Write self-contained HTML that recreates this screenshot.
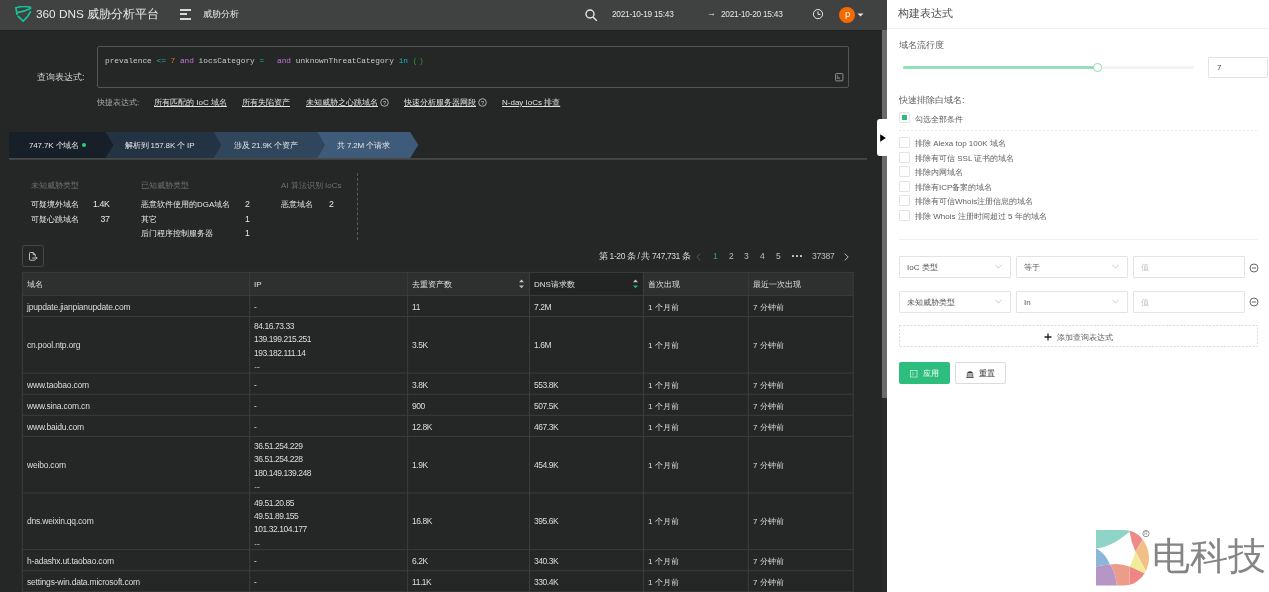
<!DOCTYPE html>
<html><head><meta charset="utf-8">
<style>
*{box-sizing:border-box;margin:0;padding:0}
html,body{width:1269px;height:592px;overflow:hidden;background:#252726;font-family:"Liberation Sans",sans-serif;}
.a{position:absolute;white-space:nowrap;will-change:transform}
#left{position:absolute;left:0;top:0;width:887px;height:592px;background:#252726;overflow:hidden}
#hdr{position:absolute;left:0;top:0;width:887px;height:30px;background:#404241}
#hdrline{position:absolute;left:0;top:30px;width:882px;height:1px;background:#1f2222}
.w{color:#e6e6e6}
.code{font-family:"Liberation Mono",monospace;font-size:7.8px;color:#c9c9c9}
.lnk{color:#e0e0e0;text-decoration:underline;font-size:8px}
.hl{height:1px;background:#3a3b3b}
.vl{width:1px;height:320px;background:#3a3b3b}
.th{font-size:8px;color:#e0e0e0;height:23px;line-height:23px;padding-top:1px}
.td{font-size:8px;color:#dcdcdc;padding-top:1.5px}
.ip{line-height:13px}
.num{font-size:8.5px;letter-spacing:-0.45px}
.dom{letter-spacing:-0.2px}
.dt{font-size:8px;color:#606060}
.cb{width:11px;height:11px;border:1px solid #e3e3e3;border-radius:1px}
.sel{width:112px;height:21.5px;border:1px solid #e3e3e3;border-radius:1px;font-size:8px;color:#555;line-height:21px;padding-left:7px}
.sel i{position:absolute;right:9px;top:6px;width:5px;height:5px;border-right:1px solid #c5c5c5;border-bottom:1px solid #c5c5c5;transform:rotate(45deg)}
.pg{top:250.5px;font-size:8.5px;color:#bdbdbd}
#drawer{position:absolute;left:887px;top:0;width:382px;height:592px;background:#fff}
</style></head><body>
<div id="left">
  <div id="hdr">
    <svg class="a" style="left:15px;top:6px" width="17" height="17" viewBox="0 0 17 17">
      <path d="M2.0 8.3 L0.9 1.8 Q8.5 -0.5 15.4 1.3 Q15.9 2.4 15.0 2.7 Q9 5.6 2.2 6.7" fill="none" stroke="#13c29e" stroke-width="1.7" stroke-linejoin="round" stroke-linecap="round"/>
      <path d="M15.4 5.8 Q13 11 8.2 15.2 L3.3 10.4" fill="none" stroke="#13c29e" stroke-width="1.7" stroke-linejoin="round" stroke-linecap="round"/>
    </svg>
    <div class="a w" style="left:36px;top:7.2px;font-size:11.8px;color:#e8e8e8">360 DNS 威胁分析平台</div>
    <div class="a" style="left:179.8px;top:9px;width:11px;height:1.5px;background:#dadada"></div>
    <div class="a" style="left:179.8px;top:13.4px;width:7px;height:1.5px;background:#dadada"></div>
    <div class="a" style="left:179.8px;top:17.7px;width:11px;height:1.5px;background:#dadada"></div>
    <div class="a w" style="left:203px;top:8px;font-size:9.2px">威胁分析</div>
    <svg class="a" style="left:585px;top:9px" width="13" height="13" viewBox="0 0 13 13"><circle cx="5" cy="5" r="4" fill="none" stroke="#e6e6e6" stroke-width="1.4"/><path d="M8 8 L11.8 11.8" stroke="#e6e6e6" stroke-width="1.4"/></svg>
    <div class="a w" style="left:612px;top:9px;font-size:8.3px;letter-spacing:-0.25px">2021-10-19 15:43</div>
    <div class="a w" style="left:707px;top:8px;font-size:9px">→</div>
    <div class="a w" style="left:720.5px;top:9px;font-size:8.3px;letter-spacing:-0.25px">2021-10-20 15:43</div>
    <svg class="a" style="left:812px;top:8px" width="12" height="12" viewBox="0 0 12 12"><circle cx="6" cy="6.1" r="4.6" fill="none" stroke="#e6e6e6" stroke-width="1"/><path d="M6 3.4 V6.4 H8.3" fill="none" stroke="#e6e6e6" stroke-width="1"/></svg>
    <div class="a" style="left:839px;top:6.8px;width:16.4px;height:16.4px;border-radius:50%;background:#f56a00"></div>
    <div class="a" style="left:844.6px;top:8.6px;font-size:9.5px;color:#fff;line-height:10px">p</div>
    <svg class="a" style="left:857px;top:13px" width="7" height="4" viewBox="0 0 7 4"><path d="M0.5 0.5 H6.5 L3.5 3.5Z" fill="#e6e6e6"/></svg>
  </div>
  <div id="hdrline"></div>

  <!-- query -->
  <div class="a" style="left:37px;top:71px;font-size:9px;color:#d0d0d0">查询表达式:</div>
  <div class="a" style="left:97px;top:46px;width:752px;height:42px;border:1px solid #535454;border-radius:2px"></div>
  <div class="a code" style="left:105px;top:57px">prevalence <span style="color:#1fb5b5">&lt;=</span> <span style="color:#d27a2a">7</span> <span style="color:#c678dd">and</span> iocsCategory <span style="color:#1fb5b5">=</span></div>
  <div class="a code" style="left:277px;top:57px"><span style="color:#c678dd">and</span> unknownThreatCategory <span style="color:#1fb5b5">in</span> <span style="color:#2ca02c;letter-spacing:1.7px">()</span></div>
  <svg class="a" style="left:834.5px;top:73px" width="8.5" height="8.5" viewBox="0 0 8.5 8.5"><rect x="0.6" y="0.6" width="7.3" height="7.3" rx="0.8" fill="none" stroke="#9a9a9a" stroke-width="0.9"/><path d="M2.4 2.2 V5.8 L3.4 4.8 L4.6 6.4 M3.4 4.8 H5" fill="none" stroke="#9a9a9a" stroke-width="0.7"/></svg>
  <div class="a" style="left:97px;top:97px;font-size:8px;color:#a8a8a8">快捷表达式:</div>
  <div class="a lnk" style="left:154px;top:97px">所有匹配的 IoC 域名</div>
  <div class="a lnk" style="left:242px;top:97px">所有失陷资产</div>
  <div class="a lnk" style="left:306px;top:97px">未知威胁之心跳域名</div>
  <svg class="a" style="left:380.2px;top:98px" width="9" height="9" viewBox="0 0 9 9"><circle cx="4.5" cy="4.5" r="3.8" fill="none" stroke="#cfcfcf" stroke-width="0.8"/><text x="4.5" y="6.6" font-size="5.5" text-anchor="middle" fill="#cfcfcf" font-family="Liberation Sans">?</text></svg>
  <svg class="a" style="left:478.3px;top:98px" width="9" height="9" viewBox="0 0 9 9"><circle cx="4.5" cy="4.5" r="3.8" fill="none" stroke="#cfcfcf" stroke-width="0.8"/><text x="4.5" y="6.6" font-size="5.5" text-anchor="middle" fill="#cfcfcf" font-family="Liberation Sans">?</text></svg>
  <div class="a lnk" style="left:404px;top:97px">快速分析服务器网段</div>
  <div class="a lnk" style="left:502px;top:97px">N-day IoCs 排查</div>

  <!-- steps -->
  <svg class="a" style="left:9px;top:132px" width="860" height="28" viewBox="0 0 860 28">
    <path d="M0 0 H96.6 L104.5 13 L96.6 26 H0Z" fill="#172029"/>
    <path d="M96.6 0 H204.6 L212.2 13 L204.6 26 H96.6 L104.5 13Z" fill="#233343"/>
    <path d="M204.6 0 H308.2 L315.8 13 L308.2 26 H204.6 L212.2 13Z" fill="#30465c"/>
    <path d="M308.2 0 H401.2 L409.3 13 L401.2 26 H308.2 L315.8 13Z" fill="#3e5b79"/>
    <rect x="0" y="26" width="858" height="1.8" fill="#474949"/>
  </svg>
  <div class="a w" style="left:28.6px;top:140px;font-size:8px;letter-spacing:-0.15px">747.7K 个域名</div>
  <div class="a" style="left:81.7px;top:143.2px;width:4px;height:4px;border-radius:50%;background:#2ecc71"></div>
  <div class="a w" style="left:125px;top:140px;font-size:8px;letter-spacing:-0.15px">解析到 157.8K 个 IP</div>
  <div class="a w" style="left:233.6px;top:140px;font-size:8px;letter-spacing:-0.15px">涉及 21.9K 个资产</div>
  <div class="a w" style="left:336.5px;top:140px;font-size:8px;letter-spacing:-0.15px">共 7.2M 个请求</div>

  <!-- stats -->
  <div class="a" style="left:30.6px;top:180px;font-size:8px;color:#707070">未知威胁类型</div>
  <div class="a w" style="left:30.6px;top:199px;font-size:8px">可疑境外域名</div>
  <div class="a w" style="left:30.6px;top:213.5px;font-size:8px">可疑心跳域名</div>
  <div class="a w" style="left:80px;top:199.1px;width:29.4px;text-align:right;font-size:8.8px;letter-spacing:-0.4px">1.4K</div>
  <div class="a w" style="left:80px;top:213.6px;width:29.4px;text-align:right;font-size:8.8px;letter-spacing:-0.4px">37</div>

  <div class="a" style="left:141px;top:180px;font-size:8px;color:#707070">已知威胁类型</div>
  <div class="a w" style="left:141px;top:199px;font-size:8px">恶意软件使用的DGA域名</div>
  <div class="a w" style="left:141px;top:213.5px;font-size:8px">其它</div>
  <div class="a w" style="left:141px;top:228px;font-size:8px">后门程序控制服务器</div>
  <div class="a w" style="left:220px;top:199.1px;width:29.4px;text-align:right;font-size:8.8px;letter-spacing:-0.4px">2</div>
  <div class="a w" style="left:220px;top:213.6px;width:29.4px;text-align:right;font-size:8.8px;letter-spacing:-0.4px">1</div>
  <div class="a w" style="left:220px;top:228.1px;width:29.4px;text-align:right;font-size:8.8px;letter-spacing:-0.4px">1</div>

  <div class="a" style="left:281px;top:180px;font-size:8px;color:#707070">AI 算法识别 IoCs</div>
  <div class="a w" style="left:281px;top:199px;font-size:8px">恶意域名</div>
  <div class="a w" style="left:304px;top:199.1px;width:29.4px;text-align:right;font-size:8.8px;letter-spacing:-0.4px">2</div>
  <div class="a" style="left:357px;top:173px;width:0;height:67px;border-left:1px dashed #5a5a5a"></div>

  <!-- toolbar -->
  <div class="a" style="left:22px;top:245px;width:22px;height:22px;border:1px solid #454646;border-radius:2.5px"></div>
  <svg class="a" style="left:29px;top:251.5px" width="9" height="9" viewBox="0 0 9 9"><path d="M4.2 0.5 H1.3 Q0.5 0.5 0.5 1.3 V7.4 Q0.5 8.2 1.3 8.2 H5.5 Q6.3 8.2 6.3 7.4 V7.3 M4.2 0.5 L6.3 2.6 V4.6 M4.2 0.5 V2.6 H6.3" fill="none" stroke="#cfcfcf" stroke-width="0.9"/><path d="M3.3 6 H8.2 M7 4.8 L8.2 6 L7 7.2" fill="none" stroke="#cfcfcf" stroke-width="0.9"/></svg>

  <!-- pagination -->
  <div class="a" style="left:598.5px;top:250.5px;font-size:8.5px;color:#dadada;letter-spacing:-0.4px">第 1-20 条 / 共 747,731 条</div>
  <svg class="a" style="left:696px;top:253px" width="5" height="8" viewBox="0 0 5 8"><path d="M4.3 0.6 L0.8 4 L4.3 7.4" fill="none" stroke="#5e5f5f" stroke-width="0.9"/></svg>
  <div class="a" style="left:712.5px;top:250.5px;font-size:8.5px;color:#27a872">1</div>
  <div class="a pg" style="left:728.5px">2</div>
  <div class="a pg" style="left:744px">3</div>
  <div class="a pg" style="left:759.5px">4</div>
  <div class="a pg" style="left:775.5px">5</div>
  <div class="a" style="left:791.5px;top:255.3px;width:1.7px;height:1.7px;background:#d0d0d0;border-radius:50%"></div>
  <div class="a" style="left:795.8px;top:255.3px;width:1.7px;height:1.7px;background:#d0d0d0;border-radius:50%"></div>
  <div class="a" style="left:800.1px;top:255.3px;width:1.7px;height:1.7px;background:#d0d0d0;border-radius:50%"></div>
  <div class="a pg" style="left:811.5px;letter-spacing:-0.2px">37387</div>
  <svg class="a" style="left:843.5px;top:253px" width="5" height="8" viewBox="0 0 5 8"><path d="M0.7 0.6 L4.2 4 L0.7 7.4" fill="none" stroke="#c8c8c8" stroke-width="0.9"/></svg>

  <div id="table">
<svg class="a" style="left:0;top:0" width="887" height="592" viewBox="0 0 887 592"><rect x="22.4" y="272.4" width="830.8" height="23.0" fill="#2e2f2f"/><rect x="529.5" y="272.4" width="113.9" height="23.0" fill="#222323"/><rect x="21.9" y="271.90" width="831.8" height="1" fill="#3b3c3c"/><rect x="21.9" y="294.90" width="831.8" height="1" fill="#3b3c3c"/><rect x="21.9" y="316.00" width="831.8" height="1" fill="#3b3c3c"/><rect x="21.9" y="372.60" width="831.8" height="1" fill="#3b3c3c"/><rect x="21.9" y="393.70" width="831.8" height="1" fill="#3b3c3c"/><rect x="21.9" y="414.80" width="831.8" height="1" fill="#3b3c3c"/><rect x="21.9" y="435.90" width="831.8" height="1" fill="#3b3c3c"/><rect x="21.9" y="492.50" width="831.8" height="1" fill="#3b3c3c"/><rect x="21.9" y="549.10" width="831.8" height="1" fill="#3b3c3c"/><rect x="21.9" y="570.20" width="831.8" height="1" fill="#3b3c3c"/><rect x="21.9" y="591.30" width="831.8" height="1" fill="#3b3c3c"/><rect x="21.9" y="271.9" width="1" height="330" fill="#3b3c3c"/><rect x="249.1" y="271.9" width="1" height="330" fill="#3b3c3c"/><rect x="407.1" y="271.9" width="1" height="330" fill="#3b3c3c"/><rect x="529.0" y="271.9" width="1" height="330" fill="#3b3c3c"/><rect x="642.9" y="271.9" width="1" height="330" fill="#3b3c3c"/><rect x="747.8" y="271.9" width="1" height="330" fill="#3b3c3c"/><rect x="852.7" y="271.9" width="1" height="330" fill="#3b3c3c"/></svg>
<div class="a th" style="left:26.9px;top:272.4px">域名</div>
<div class="a th" style="left:254.1px;top:272.4px">IP</div>
<div class="a th" style="left:412.1px;top:272.4px">去重资产数</div>
<div class="a th" style="left:534.0px;top:272.4px">DNS请求数</div>
<div class="a th" style="left:647.9px;top:272.4px">首次出现</div>
<div class="a th" style="left:752.8px;top:272.4px">最近一次出现</div>
<svg class="a" style="left:519.3px;top:279px" width="5" height="10" viewBox="0 0 5 10"><path d="M0 3.2 L2.5 0.6 L5 3.2Z" fill="#c4c4c4"/><path d="M0 6.6 L2.5 9.2 L5 6.6Z" fill="#bdbdbd"/></svg>
<svg class="a" style="left:633.2px;top:279px" width="5" height="10" viewBox="0 0 5 10"><path d="M0 3.2 L2.5 0.6 L5 3.2Z" fill="#c4c4c4"/><path d="M0 6.6 L2.5 9.2 L5 6.6Z" fill="#25b47e"/></svg>
<div class="a td num dom" style="left:26.9px;top:294.90px;height:21.1px;line-height:21.1px">jpupdate.jianpianupdate.com</div>
<div class="a td num" style="left:254.1px;top:294.90px;height:21.1px;line-height:21.1px">-</div>
<div class="a td num" style="left:411.6px;top:294.90px;height:21.1px;line-height:21.1px">11</div>
<div class="a td num" style="left:533.5px;top:294.90px;height:21.1px;line-height:21.1px">7.2M</div>
<div class="a td" style="left:647.9px;top:294.90px;height:21.1px;line-height:21.1px">1 个月前</div>
<div class="a td" style="left:752.8px;top:294.90px;height:21.1px;line-height:21.1px">7 分钟前</div>
<div class="a td num dom" style="left:26.9px;top:314.80px;height:56.6px;line-height:56.6px">cn.pool.ntp.org</div>
<div class="a td ip num" style="left:254.1px;top:318.1px">84.16.73.33</div>
<div class="a td ip num" style="left:254.1px;top:331.4px">139.199.215.251</div>
<div class="a td ip num" style="left:254.1px;top:344.7px">193.182.111.14</div>
<div class="a td ip num" style="left:254.1px;top:357.0px">...</div>
<div class="a td num" style="left:411.6px;top:314.80px;height:56.6px;line-height:56.6px">3.5K</div>
<div class="a td num" style="left:533.5px;top:314.80px;height:56.6px;line-height:56.6px">1.6M</div>
<div class="a td" style="left:647.9px;top:315.60px;height:56.6px;line-height:56.6px">1 个月前</div>
<div class="a td" style="left:752.8px;top:315.60px;height:56.6px;line-height:56.6px">7 分钟前</div>
<div class="a td num dom" style="left:26.9px;top:372.60px;height:21.1px;line-height:21.1px">www.taobao.com</div>
<div class="a td num" style="left:254.1px;top:372.60px;height:21.1px;line-height:21.1px">-</div>
<div class="a td num" style="left:411.6px;top:372.60px;height:21.1px;line-height:21.1px">3.8K</div>
<div class="a td num" style="left:533.5px;top:372.60px;height:21.1px;line-height:21.1px">553.8K</div>
<div class="a td" style="left:647.9px;top:372.60px;height:21.1px;line-height:21.1px">1 个月前</div>
<div class="a td" style="left:752.8px;top:372.60px;height:21.1px;line-height:21.1px">7 分钟前</div>
<div class="a td num dom" style="left:26.9px;top:393.70px;height:21.1px;line-height:21.1px">www.sina.com.cn</div>
<div class="a td num" style="left:254.1px;top:393.70px;height:21.1px;line-height:21.1px">-</div>
<div class="a td num" style="left:411.6px;top:393.70px;height:21.1px;line-height:21.1px">900</div>
<div class="a td num" style="left:533.5px;top:393.70px;height:21.1px;line-height:21.1px">507.5K</div>
<div class="a td" style="left:647.9px;top:393.70px;height:21.1px;line-height:21.1px">1 个月前</div>
<div class="a td" style="left:752.8px;top:393.70px;height:21.1px;line-height:21.1px">7 分钟前</div>
<div class="a td num dom" style="left:26.9px;top:414.80px;height:21.1px;line-height:21.1px">www.baidu.com</div>
<div class="a td num" style="left:254.1px;top:414.80px;height:21.1px;line-height:21.1px">-</div>
<div class="a td num" style="left:411.6px;top:414.80px;height:21.1px;line-height:21.1px">12.8K</div>
<div class="a td num" style="left:533.5px;top:414.80px;height:21.1px;line-height:21.1px">467.3K</div>
<div class="a td" style="left:647.9px;top:414.80px;height:21.1px;line-height:21.1px">1 个月前</div>
<div class="a td" style="left:752.8px;top:414.80px;height:21.1px;line-height:21.1px">7 分钟前</div>
<div class="a td num dom" style="left:26.9px;top:434.70px;height:56.6px;line-height:56.6px">weibo.com</div>
<div class="a td ip num" style="left:254.1px;top:438.0px">36.51.254.229</div>
<div class="a td ip num" style="left:254.1px;top:451.3px">36.51.254.228</div>
<div class="a td ip num" style="left:254.1px;top:464.6px">180.149.139.248</div>
<div class="a td ip num" style="left:254.1px;top:476.9px">...</div>
<div class="a td num" style="left:411.6px;top:434.70px;height:56.6px;line-height:56.6px">1.9K</div>
<div class="a td num" style="left:533.5px;top:434.70px;height:56.6px;line-height:56.6px">454.9K</div>
<div class="a td" style="left:647.9px;top:435.50px;height:56.6px;line-height:56.6px">1 个月前</div>
<div class="a td" style="left:752.8px;top:435.50px;height:56.6px;line-height:56.6px">7 分钟前</div>
<div class="a td num dom" style="left:26.9px;top:491.30px;height:56.6px;line-height:56.6px">dns.weixin.qq.com</div>
<div class="a td ip num" style="left:254.1px;top:494.6px">49.51.20.85</div>
<div class="a td ip num" style="left:254.1px;top:507.9px">49.51.89.155</div>
<div class="a td ip num" style="left:254.1px;top:521.2px">101.32.104.177</div>
<div class="a td ip num" style="left:254.1px;top:533.5px">...</div>
<div class="a td num" style="left:411.6px;top:491.30px;height:56.6px;line-height:56.6px">16.8K</div>
<div class="a td num" style="left:533.5px;top:491.30px;height:56.6px;line-height:56.6px">395.6K</div>
<div class="a td" style="left:647.9px;top:492.10px;height:56.6px;line-height:56.6px">1 个月前</div>
<div class="a td" style="left:752.8px;top:492.10px;height:56.6px;line-height:56.6px">7 分钟前</div>
<div class="a td num dom" style="left:26.9px;top:549.10px;height:21.1px;line-height:21.1px">h-adashx.ut.taobao.com</div>
<div class="a td num" style="left:254.1px;top:549.10px;height:21.1px;line-height:21.1px">-</div>
<div class="a td num" style="left:411.6px;top:549.10px;height:21.1px;line-height:21.1px">6.2K</div>
<div class="a td num" style="left:533.5px;top:549.10px;height:21.1px;line-height:21.1px">340.3K</div>
<div class="a td" style="left:647.9px;top:549.10px;height:21.1px;line-height:21.1px">1 个月前</div>
<div class="a td" style="left:752.8px;top:549.10px;height:21.1px;line-height:21.1px">7 分钟前</div>
<div class="a td num dom" style="left:26.9px;top:570.20px;height:21.1px;line-height:21.1px">settings-win.data.microsoft.com</div>
<div class="a td num" style="left:254.1px;top:570.20px;height:21.1px;line-height:21.1px">-</div>
<div class="a td num" style="left:411.6px;top:570.20px;height:21.1px;line-height:21.1px">11.1K</div>
<div class="a td num" style="left:533.5px;top:570.20px;height:21.1px;line-height:21.1px">330.4K</div>
<div class="a td" style="left:647.9px;top:570.20px;height:21.1px;line-height:21.1px">1 个月前</div>
<div class="a td" style="left:752.8px;top:570.20px;height:21.1px;line-height:21.1px">7 分钟前</div>

</div>

  <!-- scrollbar -->
  <div class="a" style="left:882px;top:30px;width:5px;height:562px;background:#2a2b2b"></div>
  <div class="a" style="left:882px;top:30px;width:5px;height:368px;background:#6b6b6b"></div>
</div>

<div id="drawer">
  <div class="a dt" style="left:11px;top:7px;font-size:10.5px;color:#505050">构建表达式</div>
  <div class="a" style="left:0;top:28px;width:382px;height:1px;background:#f0f0f0"></div>
  <div class="a dt" style="left:12px;top:39px;font-size:9.2px">域名流行度</div>
  <div class="a" style="left:16px;top:66.2px;width:291px;height:2.6px;border-radius:1.3px;background:#f3f3f3"></div>
  <div class="a" style="left:16px;top:66.2px;width:194px;height:2.6px;border-radius:1.3px;background:#95deb9"></div>
  <div class="a" style="left:205.7px;top:63.3px;width:8.6px;height:8.6px;border-radius:50%;border:1.6px solid #8edcb4;background:#fff"></div>
  <div class="a" style="left:321px;top:57px;width:60px;height:21px;border:1px solid #e3e3e3;border-radius:1px"></div>
  <div class="a dt" style="left:329.5px;top:62.5px;font-size:8px;color:#444">7</div>
  <div class="a dt" style="left:12px;top:94px;font-size:9px">快速排除白域名:</div>
  <div class="a cb" style="left:12px;top:112.1px"><div style="position:absolute;left:2.2px;top:2.2px;width:5.3px;height:5.3px;background:#2bbd7e"></div></div>
  <div class="a dt" style="left:28px;top:113.5px">勾选全部条件</div>
  <div class="a" style="left:12px;top:130px;width:359px;height:1px;background:repeating-linear-gradient(90deg,#e9e9e9 0 2.2px,transparent 2.2px 4px)"></div>
  <div class="a cb" style="left:12px;top:137.1px"></div><div class="a dt" style="left:28px;top:138px">排除 Alexa top 100K 域名</div>
  <div class="a cb" style="left:12px;top:151.6px"></div><div class="a dt" style="left:28px;top:152.5px">排除有可信 SSL 证书的域名</div>
  <div class="a cb" style="left:12px;top:166.2px"></div><div class="a dt" style="left:28px;top:167px">排除内网域名</div>
  <div class="a cb" style="left:12px;top:180.8px"></div><div class="a dt" style="left:28px;top:181.5px">排除有ICP备案的域名</div>
  <div class="a cb" style="left:12px;top:195.2px"></div><div class="a dt" style="left:28px;top:196px">排除有可信Whois注册信息的域名</div>
  <div class="a cb" style="left:12px;top:209.7px"></div><div class="a dt" style="left:28px;top:210.5px">排除 Whois 注册时间超过 5 年的域名</div>
  <div class="a" style="left:12px;top:239px;width:359px;height:1px;background:#f0f0f0"></div>

  <div class="a sel" style="left:12px;top:256px"><span>IoC 类型</span><svg style="position:absolute;right:7.8px;top:7.2px" width="7" height="5" viewBox="0 0 7 5"><path d="M0.4 0.6 L3.5 4.2 L6.6 0.6" fill="none" stroke="#c4c4c4" stroke-width="0.8"/></svg></div>
  <div class="a sel" style="left:129px;top:256px"><span>等于</span><svg style="position:absolute;right:7.8px;top:7.2px" width="7" height="5" viewBox="0 0 7 5"><path d="M0.4 0.6 L3.5 4.2 L6.6 0.6" fill="none" stroke="#c4c4c4" stroke-width="0.8"/></svg></div>
  <div class="a sel" style="left:246px;top:256px"><span style="color:#bdbdbd">值</span></div>
  <svg class="a" style="left:362px;top:262.5px" width="10" height="10" viewBox="0 0 10 10"><circle cx="5" cy="5" r="4.0" fill="none" stroke="#555" stroke-width="0.9"/><path d="M3 5 H7" stroke="#555" stroke-width="0.9"/></svg>
  <div class="a sel" style="left:12px;top:290.5px"><span>未知威胁类型</span><svg style="position:absolute;right:7.8px;top:7.2px" width="7" height="5" viewBox="0 0 7 5"><path d="M0.4 0.6 L3.5 4.2 L6.6 0.6" fill="none" stroke="#c4c4c4" stroke-width="0.8"/></svg></div>
  <div class="a sel" style="left:129px;top:290.5px"><span>In</span><svg style="position:absolute;right:7.8px;top:7.2px" width="7" height="5" viewBox="0 0 7 5"><path d="M0.4 0.6 L3.5 4.2 L6.6 0.6" fill="none" stroke="#c4c4c4" stroke-width="0.8"/></svg></div>
  <div class="a sel" style="left:246px;top:290.5px"><span style="color:#bdbdbd">值</span></div>
  <svg class="a" style="left:362px;top:296.5px" width="10" height="10" viewBox="0 0 10 10"><circle cx="5" cy="5" r="4.0" fill="none" stroke="#555" stroke-width="0.9"/><path d="M3 5 H7" stroke="#555" stroke-width="0.9"/></svg>

  <svg class="a" style="left:12px;top:325px" width="359" height="22" viewBox="0 0 359 22"><rect x="0.5" y="0.5" width="358" height="21" fill="none" stroke="#d9d9d9" stroke-width="1" stroke-dasharray="2 1.6"/></svg>
  <svg class="a" style="left:157px;top:332.5px" width="8" height="8" viewBox="0 0 8 8"><path d="M4 0.5 V7.5 M0.5 4 H7.5" stroke="#222" stroke-width="1.3"/></svg>
  <div class="a dt" style="left:170px;top:331.5px">添加查询表达式</div>

  <div class="a" style="left:12px;top:362.2px;width:50.5px;height:21.5px;background:#2dbe7e;border-radius:2px"></div>
  <svg class="a" style="left:23px;top:369.5px" width="7.5" height="7.5" viewBox="0 0 8 8"><rect x="0.5" y="0.5" width="7" height="7" fill="none" stroke="#cdeedd" stroke-width="0.8"/><path d="M2.2 2.5 L4 4 L2.2 5.5" fill="none" stroke="#cdeedd" stroke-width="0.8"/></svg>
  <div class="a" style="left:36px;top:367.5px;font-size:8.3px;color:#fff">应用</div>
  <div class="a" style="left:68px;top:362.2px;width:50.5px;height:21.5px;border:1px solid #dcdcdc;border-radius:2px"></div>
  <svg class="a" style="left:79px;top:369.5px" width="8" height="8" viewBox="0 0 8 8"><path d="M0.6 3.2 Q4 -0.5 7.4 3.2 Z" fill="#333"/><path d="M1.3 3.6 V6.6 M3 3.6 V6.6 M5 3.6 V6.6 M6.7 3.6 V6.6" stroke="#333" stroke-width="0.8"/><path d="M0.3 7.3 H7.7" stroke="#333" stroke-width="1"/></svg>
  <div class="a" style="left:92px;top:367.5px;font-size:8.3px;color:#222">重置</div>

  <svg class="a" style="left:209px;top:529.5px" width="56" height="56" viewBox="0 0 56 56">
    <defs><clipPath id="dclip"><path d="M0 0 H28 A25 27.75 0 0 1 28 55.5 H0 Z"/></clipPath></defs>
    <g clip-path="url(#dclip)">
      <path d="M-5 -5 H33.6 V1.7 Q14 18 0 18.3 H-5 Z" fill="#8fd4c8"/>
      <path d="M33.6 1.7 L33.6 -5 L55 -5 L51.5 1.2 L39.5 21.5 Q35 12 33.6 1.7 Z" fill="#ee8a88"/>
      <path d="M39.5 21.5 L51.5 1.2 L60 0 L60 50 L52 45 Z" fill="#f2bf89"/>
      <path d="M33.6 36.6 Q37.5 30 39.5 21.5 L52 45 Z" fill="#f2eb99"/>
      <path d="M33.6 36.6 L52 45 L60 60 L33.4 60 Z" fill="#ee8686"/>
      <path d="M14.1 34.5 Q24 33 33.6 36.6 L33.4 60 L21.2 60 Q20 42 14.1 34.5 Z" fill="#ee9c8a"/>
      <path d="M-5 36.5 L0 36.5 Q6 35 14.1 34.5 Q20 42 21.2 60 L-5 60 Z" fill="#b696c4"/>
      <path d="M-5 18.3 L0 18.3 Q9 23 14.1 34.5 Q6 35 0 36.5 L-5 36.5 Z" fill="#8cb6d9"/>
    </g>
  </svg>
  <svg class="a" style="left:254.5px;top:529.8px" width="8" height="8" viewBox="0 0 8 8"><circle cx="4" cy="3.6" r="3.1" fill="none" stroke="#888" stroke-width="0.9"/><text x="4" y="5.4" font-size="4.6" text-anchor="middle" fill="#8c8c8c" font-family="Liberation Sans">R</text></svg>
  <div class="a" style="left:264.8px;top:531.5px;font-size:37.5px;color:#858585">电科技</div>
</div>
<div class="a" style="left:876.5px;top:119px;width:14px;height:37px;background:#fff;border-radius:3px 0 0 3px"></div>
<svg class="a" style="left:880px;top:134px" width="6" height="8" viewBox="0 0 6 8"><path d="M0.2 0.2 L5.8 4 L0.2 7.8Z" fill="#000"/></svg>

</body></html>
